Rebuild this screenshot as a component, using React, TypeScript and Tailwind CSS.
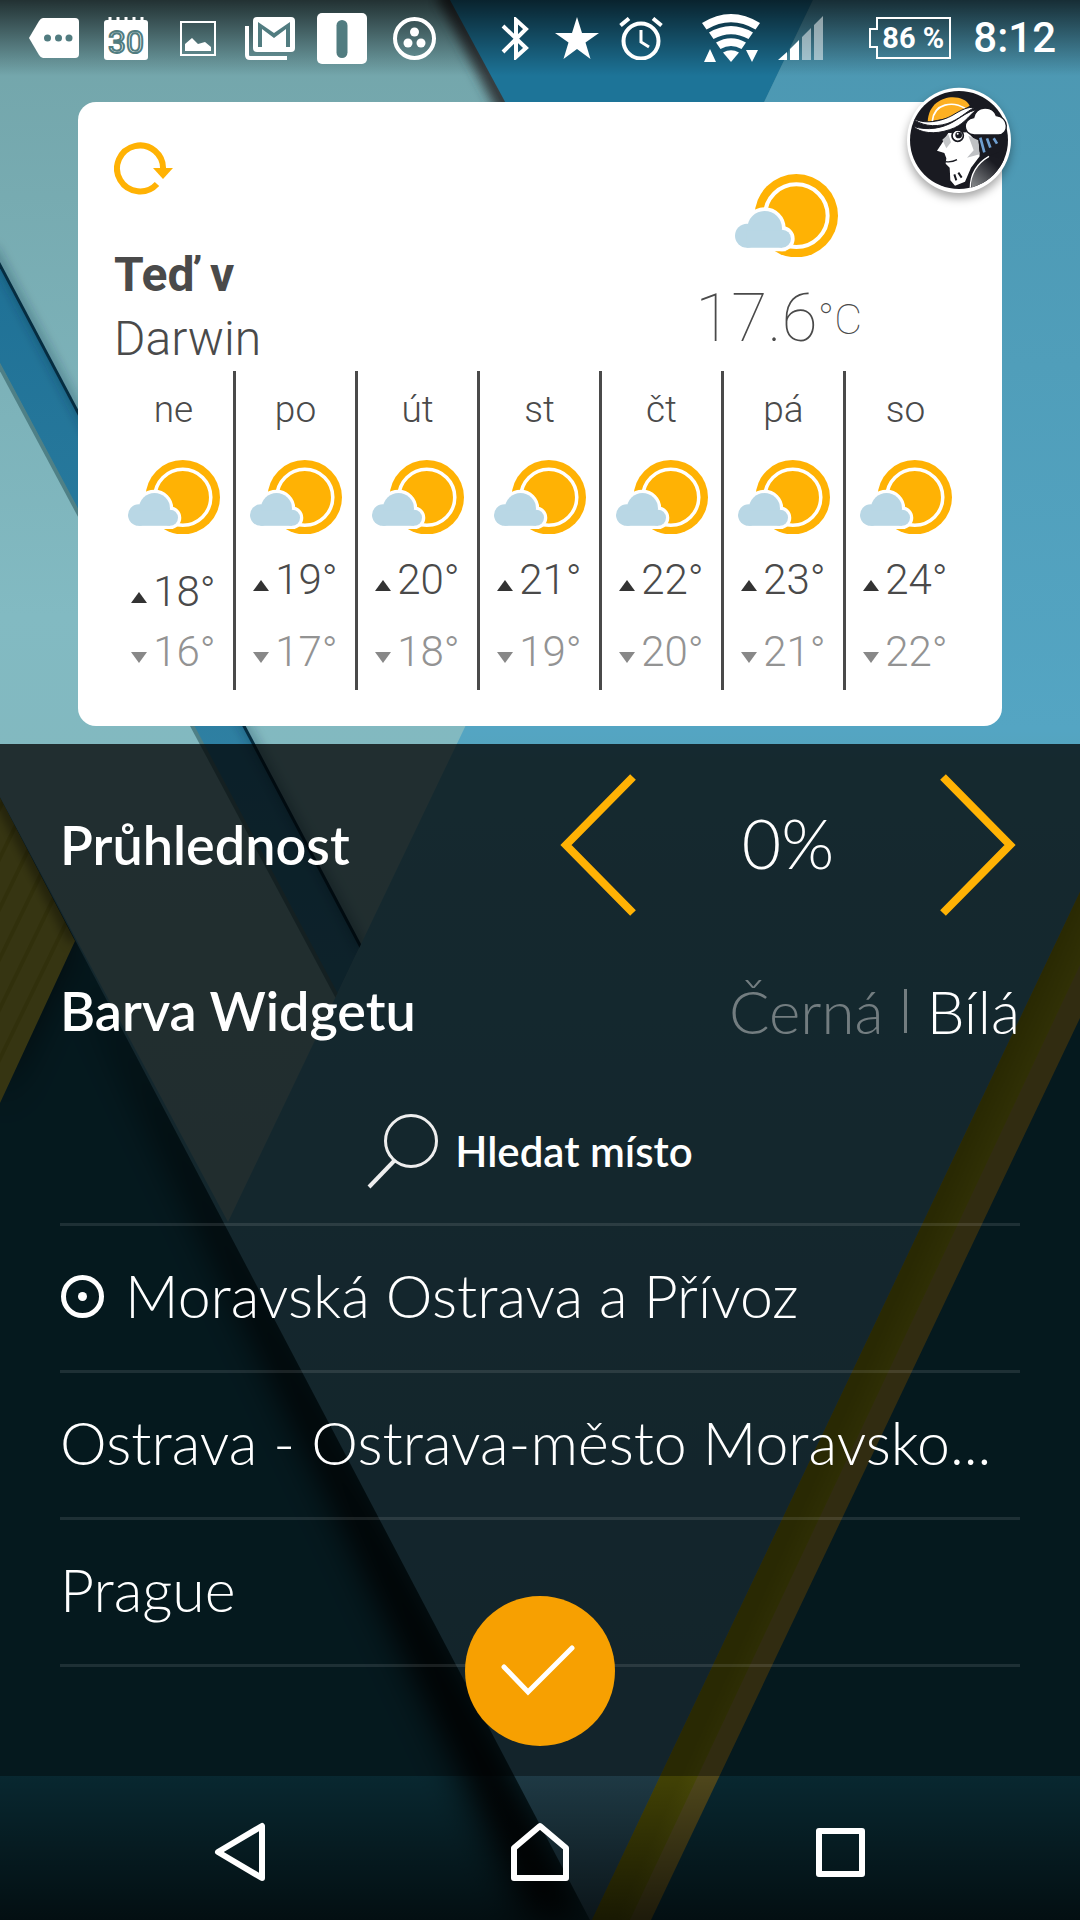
import { useState } from "react";

const DAYS = [
  { name: "ne", high: 18, low: 16 },
  { name: "po", high: 19, low: 17 },
  { name: "út", high: 20, low: 18 },
  { name: "st", high: 21, low: 19 },
  { name: "čt", high: 22, low: 20 },
  { name: "pá", high: 23, low: 21 },
  { name: "so", high: 24, low: 22 },
];

const PLACES = [
  { name: "Moravská Ostrava a Přívoz", current: true },
  { name: "Ostrava - Ostrava-město Moravsko...", current: false },
  { name: "Prague", current: false },
];

function Wallpaper() {
  return (
    <svg
      className="absolute inset-0 h-full w-full"
      viewBox="0 0 1080 1920"
      preserveAspectRatio="none"
      aria-hidden="true"
    >
      <defs>
        <filter id="soft" x="-20%" y="-20%" width="140%" height="140%">
          <feGaussianBlur stdDeviation="18" />
        </filter>
        <filter id="soft-sm" x="-20%" y="-20%" width="140%" height="140%">
          <feGaussianBlur stdDeviation="6" />
        </filter>
        <linearGradient id="right-panel" x1="0" y1="0" x2="0" y2="1">
          <stop offset="0" stopColor="#4c97b1" />
          <stop offset="0.38" stopColor="#54a5c3" />
          <stop offset="0.4" stopColor="#54a3bb" />
          <stop offset="1" stopColor="#4a8ca8" />
        </linearGradient>
        <linearGradient id="left-panel" x1="0" y1="0" x2="0" y2="1">
          <stop offset="0" stopColor="#72a4a9" />
          <stop offset="0.5" stopColor="#82bac2" />
          <stop offset="1" stopColor="#82b4b8" />
        </linearGradient>
        <linearGradient id="band" x1="0" y1="0" x2="0" y2="1">
          <stop offset="0" stopColor="#1f7196" />
          <stop offset="1" stopColor="#3687a8" />
        </linearGradient>
        <linearGradient id="olive" gradientUnits="userSpaceOnUse" x1="940" y1="1200" x2="980" y2="1218">
          <stop offset="0" stopColor="#a4a40c" />
          <stop offset="1" stopColor="#cccc1c" />
        </linearGradient>
        <pattern id="ribs" width="22" height="22" patternUnits="userSpaceOnUse" patternTransform="rotate(26)">
          <rect width="22" height="22" fill="#d8d448" />
          <rect width="4" height="22" fill="#c4c030" />
        </pattern>
        <clipPath id="left-clip">
          <polygon points="0,0 813,0 228,1222 0,797" />
        </clipPath>
      </defs>
      <rect width="1080" height="1920" fill="#156378" />
      <polygon points="0,1103 75,941 0,797" fill="#000" fillOpacity="0.6" filter="url(#soft)" />
      <polygon points="0,797 75,941 0,1103" fill="url(#ribs)" />
      <polygon points="70,940 176,1130 590,1920 530,1920" fill="#000" filter="url(#soft)" />
      <line x1="-20" y1="760" x2="75" y2="941" stroke="#000" strokeOpacity="0.5" strokeWidth="10" filter="url(#soft-sm)" />
      <polygon points="0,0 1080,0 1080,900 592,1920 590,1920 0,797" fill="url(#right-panel)" />
      <polygon points="1080,892 1080,1018 651,1920 592,1920" fill="#c4b044" />
      <polygon points="1080,892 1080,965 630,1920 592,1920" fill="url(#olive)" />
      <g clipPath="url(#left-clip)">
        <rect width="820" height="1230" fill="url(#left-panel)" />
        <polygon points="0,263 363,950 339,998 0,364" fill="url(#band)" />
        <line x1="-8" y1="248" x2="363" y2="950" stroke="#062d40" strokeWidth="3" filter="url(#soft-sm)" />
        <line x1="-8" y1="250" x2="363" y2="951" stroke="#062d40" strokeWidth="3" />
        <line x1="-8" y1="352" x2="339" y2="1000" stroke="#4f8086" strokeWidth="4" />
        <line x1="445" y1="-10" x2="530" y2="148" stroke="#30393a" strokeWidth="22" filter="url(#soft-sm)" />
        <polygon points="450,0 820,0 645,361" fill="#1d7498" />
      </g>
    </svg>
  );
}

function WeatherIcon({ className }: { className: string }) {
  return (
    <svg className={className} viewBox="283 101 309 250" aria-hidden="true">
      <circle cx="467" cy="226" r="125" fill="#ffb204" />
      <circle cx="467" cy="226" r="94" fill="none" stroke="#fff" strokeWidth="12" />
      <g fill="#b9d7e5" stroke="#fff" strokeWidth="22">
        <circle cx="318" cy="286" r="36" />
        <circle cx="372" cy="264" r="52" />
        <circle cx="424" cy="295" r="27" />
        <path d="M318 286H424V322H318Z" />
      </g>
      <g fill="#b9d7e5">
        <circle cx="319" cy="286" r="36" />
        <circle cx="372" cy="264" r="52" />
        <circle cx="424" cy="295" r="27" />
        <path d="M318 270H424V322H318Z" />
      </g>
    </svg>
  );
}

function Avatar() {
  return (
    <svg
      className="absolute -top-[15px] -right-[9px] w-[104px] drop-shadow-[0_5px_5px_rgba(0,0,0,0.35)]"
      viewBox="22 20 312 320"
      role="img"
      aria-label="Logo"
    >
      <defs>
        <clipPath id="badge">
          <circle cx="178" cy="179" r="147" />
        </clipPath>
        <linearGradient id="coat" x1="1" y1="0" x2="0" y2="1">
          <stop offset="0.3" stopColor="#1a1b22" />
          <stop offset="1" stopColor="#8f9294" />
        </linearGradient>
      </defs>
      <ellipse cx="178" cy="180" rx="156" ry="158" fill="#fff" />
      <circle cx="178" cy="179" r="147" fill="#191a21" />
      <g clipPath="url(#badge)">
        <path d="M84 124C88 40 190 35 210 76L160 110Z" fill="#fdb022" />
        <path d="M98 122C104 68 160 62 196 84" fill="none" stroke="#fff" strokeWidth="5" />
        <path d="M38 112C70 134 126 124 160 104C185 89 205 78 224 82C200 94 178 118 142 130C104 142 60 136 38 112Z" fill="#fff" stroke="#191a21" strokeWidth="3" />
        <path d="M40 138C84 152 130 144 165 122C188 108 204 94 230 88C206 108 190 136 150 148C104 164 62 158 40 138Z" fill="#fff" stroke="#191a21" strokeWidth="3" />
        <path d="M146 158L126 190L112 211L134 218L140 234L138 250L150 262L152 300L166 316L196 304L214 262L240 228L236 190L204 156Z" fill="#fff" />
        <path d="M128 178L140 204L154 186L146 162Z" fill="#c4c6c8" />
        <path d="M206 166L236 180L240 222L202 232L222 210Z" fill="#bfc1c4" />
        <circle cx="174" cy="166" r="17" fill="#fff" stroke="#191a21" strokeWidth="5" />
        <circle cx="177" cy="164" r="10" fill="#191a21" />
        <circle cx="174" cy="160" r="3" fill="#fff" />
        <path d="M150 156Q172 142 200 152" fill="none" stroke="#191a21" strokeWidth="5" />
        <path d="M138 244Q156 247 172 238" fill="none" stroke="#191a21" strokeWidth="4" />
        <path d="M164 282L170 300M176 277L186 292" stroke="#191a21" strokeWidth="6" />
        <path d="M236 168L322 168L300 214L266 228L240 214Z" fill="#191a21" />
        <path d="M242 172L254 216M262 174L272 202M282 174L292 190" stroke="#6f9fd0" strokeWidth="8" />
        <path d="M216 330C212 280 230 250 268 228L330 240L310 330Z" fill="url(#coat)" />
        <path d="M212 330C210 280 230 250 268 228" fill="none" stroke="#fff" strokeWidth="4" />
      </g>
      <path
        d="M224 164C188 162 188 116 222 112C230 76 278 74 290 106C328 110 330 162 296 164Z"
        fill="#fff"
        stroke="#191a21"
        strokeWidth="4"
      />
    </svg>
  );
}

function StatusBar() {
  return (
    <header className="flex h-[76px] items-center justify-between bg-linear-to-b from-black/70 to-black/0 pr-6 pl-[18px] text-white">
      <div className="flex items-center">
        <span className="flex w-[72px] justify-center">
          <svg className="w-[50px]" viewBox="0 0 50 40" aria-hidden="true">
            <path d="M14 0H46Q50 0 50 4V36Q50 40 46 40H14Q12 40 10 37L0 20L10 3Q12 0 14 0Z" fill="currentColor" />
            <g fill="#517c80">
              <circle cx="18.500" cy="20" r="3.500" />
              <circle cx="29.500" cy="20" r="3.500" />
              <circle cx="40" cy="20" r="3.500" />
            </g>
          </svg>
        </span>
        <span className="flex w-[72px] justify-center">
          <svg className="w-[44px]" viewBox="0 0 44 43" aria-hidden="true">
            <rect y="3" width="44" height="40" rx="3" fill="currentColor" />
            <path d="M6 0V5M14 0V5M22 0V5M30 0V5M38 0V5" stroke="currentColor" strokeWidth="3" />
            <text
              x="22"
              y="36"
              textAnchor="middle"
              fontFamily="Roboto, sans-serif"
              fontSize="32"
              fontWeight="400"
              fill="#fff"
              stroke="#517c80"
              strokeWidth="2"
            >
              30
            </text>
          </svg>
        </span>
        <span className="flex w-[72px] justify-center">
          <svg className="w-[36px]" viewBox="0 0 36 35" fill="none" stroke="currentColor" aria-hidden="true">
            <rect x="1" y="1" width="34" height="33" strokeWidth="2" />
            <path d="M5 30V23L12 17L18 23L25 21L31 26V30Z" fill="currentColor" stroke="none" />
          </svg>
        </span>
        <span className="flex w-[72px] justify-center">
          <svg className="w-[50px]" viewBox="0 0 50 43" aria-hidden="true">
            <path d="M2 9V38Q2 41 5 41H42" fill="none" stroke="currentColor" strokeWidth="4" />
            <rect x="8" y="0" width="42" height="35" rx="4" fill="currentColor" />
            <path d="M13 5L29 16L45 5V30H41V12L29 21L17 12V30H13Z" fill="#517c80" />
          </svg>
        </span>
        <span className="flex w-[72px] justify-center">
          <svg className="w-[50px]" viewBox="0 0 50 51" aria-hidden="true">
            <rect width="50" height="51" rx="5" fill="currentColor" />
            <rect x="19.500" y="7" width="11" height="38" rx="5.500" fill="#517c80" />
          </svg>
        </span>
        <span className="flex w-[72px] justify-center">
          <svg className="w-[43px]" viewBox="0 0 43 43" fill="currentColor" aria-hidden="true">
            <circle cx="21.500" cy="21.500" r="19.500" fill="none" stroke="currentColor" strokeWidth="4" />
            <circle cx="21.500" cy="15" r="4.500" />
            <circle cx="15" cy="26" r="4.500" />
            <circle cx="28" cy="26" r="4.500" />
          </svg>
        </span>
      </div>
      <div className="flex items-center">
        <span className="flex w-[64px] justify-center">
          <svg className="w-[28px]" viewBox="0 0 28 43" fill="none" stroke="currentColor" strokeWidth="4" aria-hidden="true">
            <path d="M2 9L25 31L15 40V3L25 12L2 35" />
          </svg>
        </span>
        <span className="flex w-[60px] justify-center">
          <svg className="w-[44px]" viewBox="0 0 44 42" fill="currentColor" aria-hidden="true">
            <path d="M22 0L27 16H44L30.500 25.500L35.500 42L22 32L8.500 42L13.500 25.500L0 16H17Z" />
          </svg>
        </span>
        <span className="flex w-[68px] justify-center">
          <svg className="w-[44px]" viewBox="0 0 44 43" fill="none" stroke="currentColor" strokeWidth="4" aria-hidden="true">
            <circle cx="22" cy="24" r="17.500" />
            <path d="M22 13V25L30 30" strokeWidth="3" />
            <path d="M1.500 8.500L10 1.500M34 1.500L42.500 8.500" />
          </svg>
        </span>
        <span className="ml-5 flex w-[72px] justify-center">
          <svg className="w-[58px]" viewBox="0 0 58 48" fill="currentColor" aria-hidden="true">
            <path d="M0 9Q29 -9 58 9L53.500 15.500Q29 1 4.500 15.500Z" />
            <path d="M7 18.500Q29 5.500 51 18.500L46.500 25Q29 15.500 11.500 25Z" />
            <path d="M14 28.500Q29 20 44 28.500L39.500 35Q29 29 18.500 35Z" />
            <path d="M29 48L21 38.500Q29 34 37 38.500Z" />
            <path d="M2 48L8 35L14 48ZM44 36H56L50 48Z" />
          </svg>
        </span>
        <span className="flex w-[66px] justify-center">
          <svg className="w-[45px]" viewBox="0 0 45 44" fill="currentColor" aria-hidden="true">
            <path d="M0 44L9 36V44ZM12 33L21 24V44H12Z" />
            <path d="M24 21L33 12V44H24ZM36 9L45 0V44H36Z" opacity="0.5" />
          </svg>
        </span>
        <span className="relative ml-9 flex h-[42px] w-[82px] items-center justify-center pl-[6px] font-bold">
          <svg className="absolute inset-0 h-full w-full" viewBox="0 0 82 42" fill="none" stroke="currentColor" strokeWidth="2" aria-hidden="true">
            <path d="M8 1H81V41H8V30H1V12H8Z" />
          </svg>
          <span className="text-[29px] leading-none whitespace-nowrap">86 %</span>
        </span>
        <span className="ml-[22px] text-[42px] leading-none font-medium">8:12</span>
      </div>
    </header>
  );
}

function DayColumn({ name, high, low, first, last }: { name: string; high: number; low: number; first: boolean; last: boolean }) {
  return (
    <li className={`flex flex-1 flex-col items-center text-[#4a4a4a] ${last ? "" : "border-r-[3px] border-[#4a4a4a]"}`}>
      <span className="mt-[15px] text-[37px] leading-[48px] font-light">{name}</span>
      <WeatherIcon className="mt-[26px] w-[92px]" />
      <span className={`flex items-baseline gap-1.5 text-[42px] leading-[48px] font-light ${first ? "mt-[34px]" : "mt-[22px]"}`}>
        <svg className="w-[16px]" viewBox="0 0 16 14" aria-hidden="true">
          <path d="M8 0L16 11H0Z" fill="#333" />
        </svg>
        {high}°
      </span>
      <span className={`flex items-baseline gap-1.5 text-[42px] leading-[48px] font-light text-[#939393] ${first ? "mt-[12px]" : "mt-[24px]"}`}>
        <svg className="w-[16px]" viewBox="0 0 16 14" aria-hidden="true">
          <path d="M0 0H16L8 11Z" fill="#888" />
        </svg>
        {low}°
      </span>
    </li>
  );
}

function WidgetPreview() {
  return (
    <section className="relative mx-[78px] mt-[26px] mb-[18px] rounded-[18px] bg-white pt-10 pr-[37px] pb-9 pl-9 text-[#4a4a4a]">
      <Avatar />
      <div className="flex items-start justify-between">
        <div>
          <button type="button" aria-label="Obnovit" className="block">
            <svg className="w-[60px]" viewBox="0 0 60 53" fill="none" aria-hidden="true">
              <path d="M49 28A23 23 0 1 0 43 42" stroke="#ffb204" strokeWidth="6" />
              <path d="M39 26H59L49 37Z" fill="#ffb204" />
            </svg>
          </button>
          <h1 className="mt-12 text-[48px] leading-[64px] font-bold">Teď v</h1>
          <p className="text-[48px] leading-[64px] font-light">Darwin</p>
        </div>
        <div className="mr-[103px] flex flex-col items-end pt-8">
          <WeatherIcon className="mr-6 w-[103px]" />
          <p className="mt-[22px] flex text-[66px] leading-[80px] font-thin">
            17.6<span className="text-[43px]">°C</span>
          </p>
        </div>
      </div>
      <ul className="flex h-[319px]">
        {DAYS.map((day, i) => (
          <DayColumn key={day.name} {...day} first={i === 0} last={i === DAYS.length - 1} />
        ))}
      </ul>
    </section>
  );
}

function Settings() {
  const [opacity, setOpacity] = useState(0);
  const [color, setColor] = useState<"black" | "white">("white");

  return (
    <main className="relative flex-1 bg-black/75 px-[60px] pt-[29px] font-['Lato',sans-serif] text-white">
      <div className="flex items-center justify-between">
        <h2 className="text-[54px] leading-[60px] font-semibold">Průhlednost</h2>
        <div className="mr-1 flex w-[456px] items-center justify-between">
          <button type="button" aria-label="Snížit" onClick={() => setOpacity(Math.max(0, opacity - 10))}>
            <svg className="w-[76px]" viewBox="0 0 76 144" fill="none" stroke="#ffb204" strokeWidth="8" aria-hidden="true">
              <path d="M73 4L6 72L73 140" />
            </svg>
          </button>
          <output className="pb-1 text-[68px] leading-[80px] font-light">{opacity}%</output>
          <button type="button" aria-label="Zvýšit" onClick={() => setOpacity(Math.min(100, opacity + 10))}>
            <svg className="w-[76px]" viewBox="0 0 76 144" fill="none" stroke="#ffb204" strokeWidth="8" aria-hidden="true">
              <path d="M3 4L70 72L3 140" />
            </svg>
          </button>
        </div>
      </div>
      <div className="flex h-[192px] items-center justify-between pb-1">
        <h2 className="text-[54px] leading-[60px] font-semibold">Barva Widgetu</h2>
        <div className="flex items-center gap-5 text-[60px] leading-[64px] font-light">
          <button type="button" className={color === "black" ? "text-white" : "text-[#737d80]"} onClick={() => setColor("black")}>
            Černá
          </button>
          <span className="h-[44px] w-[3px] bg-[#737d80]" />
          <button type="button" className={color === "white" ? "text-white" : "text-[#737d80]"} onClick={() => setColor("white")}>
            Bílá
          </button>
        </div>
      </div>
      <button type="button" className="mx-auto flex h-[114px] items-center gap-4 pr-5 pb-[30px]">
        <svg className="w-[72px]" viewBox="0 0 72 76" fill="none" stroke="#eee" strokeWidth="3" aria-hidden="true">
          <circle cx="44" cy="28" r="25.500" />
          <path d="M28 47L2 74" strokeWidth="4" />
        </svg>
        <span className="text-[42px] leading-[48px] font-semibold">Hledat místo</span>
      </button>
      <ul className="border-t-[3px] border-white/10">
        {PLACES.map((place) => (
          <li key={place.name} className="border-b-[3px] border-white/10">
            <button type="button" className="flex h-[144px] w-full items-center gap-5 pb-1 text-left text-[59px] leading-[72px] font-light whitespace-nowrap">
              {place.current && (
                <svg className="w-[45px] shrink-0" viewBox="0 0 45 45" fill="none" stroke="currentColor" strokeWidth="5" aria-hidden="true">
                  <circle cx="22.500" cy="22.500" r="19" />
                  <circle cx="22.500" cy="22.500" r="4.500" fill="currentColor" stroke="none" />
                </svg>
              )}
              <span>{place.name}</span>
            </button>
          </li>
        ))}
      </ul>
      <button
        type="button"
        aria-label="Potvrdit"
        className="absolute bottom-[30px] left-1/2 size-[150px] -translate-x-1/2 rounded-full bg-[#f7a001]"
      >
        <svg className="w-full" viewBox="0 0 150 150" fill="none" stroke="#fff" strokeWidth="5" strokeLinecap="round" aria-hidden="true">
          <path d="M39 71L63 96L107 52" />
        </svg>
      </button>
    </main>
  );
}

function NavBar() {
  return (
    <nav className="grid h-[144px] grid-cols-3 bg-linear-to-b from-black/60 to-black/85 px-[90px] pt-2 text-white">
      <button type="button" aria-label="Zpět" className="flex items-center justify-center">
        <svg className="w-[60px]" viewBox="0 0 60 60" fill="none" stroke="currentColor" strokeWidth="6" strokeLinejoin="round" aria-hidden="true">
          <path d="M52 4V56L8 30Z" />
        </svg>
      </button>
      <button type="button" aria-label="Domů" className="flex items-center justify-center">
        <svg className="w-[60px]" viewBox="0 0 60 60" fill="none" stroke="currentColor" strokeWidth="6" strokeLinejoin="round" aria-hidden="true">
          <path d="M30 4L56 26V56H4V26Z" />
        </svg>
      </button>
      <button type="button" aria-label="Přehled" className="flex items-center justify-center">
        <svg className="w-[60px]" viewBox="0 0 60 60" fill="none" stroke="currentColor" strokeWidth="6" strokeLinejoin="round" aria-hidden="true">
          <rect x="9" y="9" width="43" height="43" />
        </svg>
      </button>
    </nav>
  );
}

export default function App() {
  return (
    <div className="relative min-h-screen overflow-hidden font-['Roboto',sans-serif]">
      <Wallpaper />
      <div className="relative flex min-h-screen flex-col">
        <StatusBar />
        <WidgetPreview />
        <Settings />
        <NavBar />
      </div>
    </div>
  );
}
